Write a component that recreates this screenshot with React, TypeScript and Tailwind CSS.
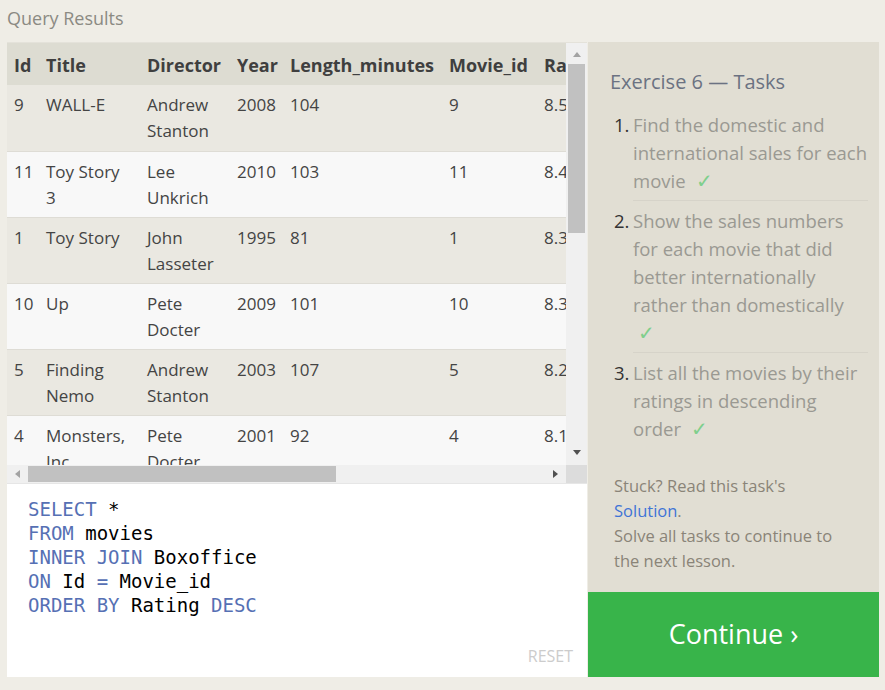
import React from 'react';

const columns = [
  { name: 'Id', w: 'w-[32px]' },
  { name: 'Title', w: 'w-[101px]' },
  { name: 'Director', w: 'w-[90px]' },
  { name: 'Year', w: 'w-[53px]' },
  { name: 'Length_minutes', w: 'w-[159px]' },
  { name: 'Movie_id', w: 'w-[95px]' },
  { name: 'Rating', w: 'w-[80px]' },
  { name: 'Domestic_sales', w: 'w-[150px]' },
  { name: 'International_sales', w: 'w-[180px]' },
];

const rows = [
  ['9', 'WALL-E', 'Andrew Stanton', '2008', '104', '9', '8.5', '223808164', '297503696'],
  ['11', 'Toy Story 3', 'Lee Unkrich', '2010', '103', '11', '8.4', '415004880', '648167031'],
  ['1', 'Toy Story', 'John Lasseter', '1995', '81', '1', '8.3', '191796233', '170162503'],
  ['10', 'Up', 'Pete Docter', '2009', '101', '10', '8.3', '293004164', '438338580'],
  ['5', 'Finding Nemo', 'Andrew Stanton', '2003', '107', '5', '8.2', '380843261', '555900000'],
  ['4', 'Monsters, Inc.', 'Pete Docter', '2001', '92', '4', '8.1', '289916256', '272900000'],
];

// lines as they wrap in the panel
const tasks = [
  ['Find the domestic and', 'international sales for each', 'movie'],
  ['Show the sales numbers', 'for each movie that did', 'better internationally', 'rather than domestically', ''],
  ['List all the movies by their', 'ratings in descending', 'order'],
];

const Kw = ({ children }: { children: React.ReactNode }) => (
  <span className="text-[#5670b4]">{children}</span>
);

const App = () => {
  return (
    <div className="min-h-screen bg-[#efede6] px-[7px] pt-[6px] font-['Open_Sans','Noto_Sans',sans-serif]">
      <div className="text-[18px] leading-[24px] text-[#8b8a83]">Query Results</div>

      <div className="mt-[12px] flex w-[872px] h-[635px] gap-[1px]">
        {/* left side: results + editor */}
        <div className="flex w-[580px] flex-col">
          <div className="flex h-[423px] border-t border-[#e4e2da]">
            <div className="w-[559px] overflow-hidden">
              <table className="table-fixed w-[940px] border-collapse text-[17px] leading-[26px] text-[#444]">
                <thead>
                  <tr className="bg-[#dddcd2]">
                    {columns.map((c) => (
                      <th key={c.name} className={`${c.w} whitespace-nowrap px-[7px] pt-[9px] pb-[7px] text-left text-[18px] font-bold text-[#3f3f3f]`}>
                        {c.name}
                      </th>
                    ))}
                  </tr>
                </thead>
                <tbody>
                  {rows.map((r, i) => (
                    <tr key={i} className={`${i % 2 === 0 ? 'bg-[#eae8e1]' : 'bg-[#f8f8f8]'} border-b border-[#dedcd5] h-[66px]`}>
                      {r.map((cell, j) => (
                        <td key={j} className="px-[7px] pt-[7px] pb-[6px] align-top">
                          {cell}
                        </td>
                      ))}
                    </tr>
                  ))}
                </tbody>
              </table>
            </div>
            {/* vertical scrollbar */}
            <div className="relative w-[21px] bg-[#f0f0f0]">
              <div className="absolute left-[7px] top-[9px] h-0 w-0 border-x-[4px] border-b-[5px] border-x-transparent border-b-[#a3a3a3]" />
              <div className="absolute left-[2px] top-[21px] h-[169px] w-[17px] bg-[#c1c1c1]" />
              <div className="absolute left-[7px] top-[407px] h-0 w-0 border-x-[4px] border-t-[5px] border-x-transparent border-t-[#505050]" />
            </div>
          </div>
          {/* horizontal scrollbar */}
          <div className="flex h-[18px]">
            <div className="relative w-[559px] bg-[#f0f0f0]">
              <div className="absolute left-[8px] top-[5px] h-0 w-0 border-y-[4px] border-r-[5px] border-y-transparent border-r-[#a3a3a3]" />
              <div className="absolute left-[21px] top-[1px] h-[16px] w-[308px] bg-[#c1c1c1]" />
              <div className="absolute left-[546px] top-[5px] h-0 w-0 border-y-[4px] border-l-[5px] border-y-transparent border-l-[#505050]" />
            </div>
            <div className="w-[21px] bg-[#dcdcdc]" />
          </div>
          {/* editor */}
          <div className="relative flex-1 border-t border-[#e6e6e6] bg-white pl-[21px] pt-[13px]">
            <pre className="font-['DejaVu_Sans_Mono',monospace] text-[19px] leading-[24px] text-black">
              <Kw>SELECT</Kw> *{'\n'}
              <Kw>FROM</Kw> movies{'\n'}
              <Kw>INNER JOIN</Kw> Boxoffice{'\n'}
              <Kw>ON</Kw> Id <Kw>=</Kw> Movie_id{'\n'}
              <Kw>ORDER BY</Kw> Rating <Kw>DESC</Kw>
            </pre>
            <div className="absolute bottom-[10px] right-[14px] text-[16px] leading-[22px] text-[#cccccc]">RESET</div>
          </div>
        </div>

        {/* right side: tasks */}
        <div className="flex w-[291px] flex-col bg-[#e1ded3]">
          <div className="flex-1 pl-[22px] pr-[11px] pt-[26px]">
            <h2 className="text-[20px] leading-[28px] text-[#6b7282]">Exercise 6 — Tasks</h2>
            <ol className="mt-[15px] pl-[4px]">
              {tasks.map((lines, i) => (
                <li
                  key={i}
                  className={`flex text-[18.5px] leading-[28px] ${i < tasks.length - 1 ? 'pb-[5px]' : ''} ${i > 0 ? 'pt-[6px]' : ''}`}
                >
                  <span className="w-[19px] shrink-0 text-[#333]">{i + 1}.</span>
                  <span
                    className={`flex-1 whitespace-nowrap text-[#9a9992] ${i < tasks.length - 1 ? 'border-b border-[#d6d3c9] pb-[5px] -mb-[5px]' : ''}`}
                  >
                    {lines.map((line, k) => (
                      <div key={k}>
                        {line}
                        {k === lines.length - 1 && (
                          <span className={`${line ? 'ml-[10px]' : 'ml-[5px]'} text-[20px] text-[#7fcf8c]`}>✓</span>
                        )}
                      </div>
                    ))}
                  </span>
                </li>
              ))}
            </ol>
            <div className="mt-[30px] pl-[4px] pr-[24px] text-[16.5px] leading-[25px] text-[#8a8478]">
              Stuck? Read this task's
              <br />
              <span className="text-[#3f74d6]">Solution</span>.
              <br />
              Solve all tasks to continue to the next lesson.
            </div>
          </div>
          <div className="flex h-[85px] items-center justify-center bg-[#38b44a] text-[27px] text-white">
            Continue ›
          </div>
        </div>
      </div>
    </div>
  );
};

export default App;
